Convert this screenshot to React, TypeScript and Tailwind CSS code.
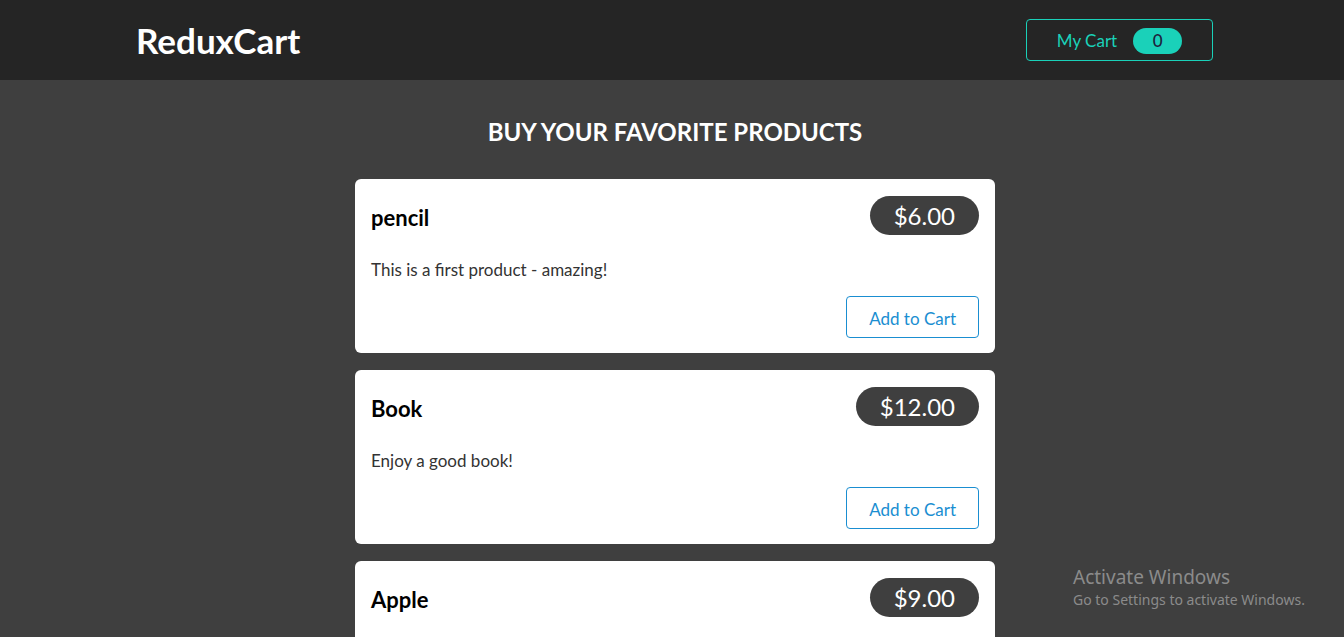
import React from 'react';

interface Product {
  id: string;
  title: string;
  price: number;
  description: string;
}

const PRODUCTS: Product[] = [
  { id: 'p1', title: 'pencil', price: 6, description: 'This is a first product - amazing!' },
  { id: 'p2', title: 'Book', price: 12, description: 'Enjoy a good book!' },
  { id: 'p3', title: 'Apple', price: 9, description: 'Fresh and crunchy.' },
];

const ProductItem: React.FC<{ product: Product }> = ({ product }) => (
  <li className="bg-white rounded-md px-4 pt-[17px] pb-[15px]">
    <header className="flex items-center justify-between h-[39px]">
      <h3 className="text-[22px] font-bold text-black pt-[3px]">{product.title}</h3>
      <div className="bg-[#3f3f3f] text-white text-[24px] rounded-full h-[39px] px-6 flex items-center pt-[1px]">
        ${product.price.toFixed(2)}
      </div>
    </header>
    <p className="text-[17px] text-[#333] mt-[24px] leading-[22px]">{product.description}</p>
    <div className="flex justify-end mt-[15px]">
      <button className="h-[42px] px-[22px] pt-[3px] border border-[#1a8ed1] rounded text-[#1a8ed1] text-[17px] bg-white">
        Add to Cart
      </button>
    </div>
  </li>
);

export default function App() {
  return (
    <div className="bg-[#3f3f3f] font-['Lato',sans-serif] relative overflow-hidden h-[637px]">
      <header className="h-20 bg-[#252525] flex items-center justify-between pl-[136px] pr-[131px]">
        <h1 className="text-white text-[35px] font-bold">ReduxCart</h1>
        <button className="w-[187px] h-[42px] border border-[#1ad1b9] rounded flex items-center justify-center gap-4 text-[#1ad1b9] text-[17px] pt-[2px]">
          <span>My Cart</span>
          <span className="bg-[#1ad1b9] text-[#1d1f3c] rounded-full w-[49px] h-[26px] flex items-center justify-center font-medium">0</span>
        </button>
      </header>
      <main className="pt-[34px]">
        <h2 className="text-center text-white text-[24px] font-bold pl-[6px]">BUY YOUR FAVORITE PRODUCTS</h2>
        <ul className="w-[640px] ml-[355px] mt-[29px] flex flex-col gap-[17px]">
          {PRODUCTS.map((p) => (
            <ProductItem key={p.id} product={p} />
          ))}
        </ul>
      </main>
      <div className="absolute left-[1073px] top-[565px] text-[#8b8b8b] font-['Noto_Sans',sans-serif] pointer-events-none">
        <div className="text-[19px] leading-6">Activate Windows</div>
        <div className="text-[14px] leading-5 mt-[1px]">Go to Settings to activate Windows.</div>
      </div>
    </div>
  );
}
